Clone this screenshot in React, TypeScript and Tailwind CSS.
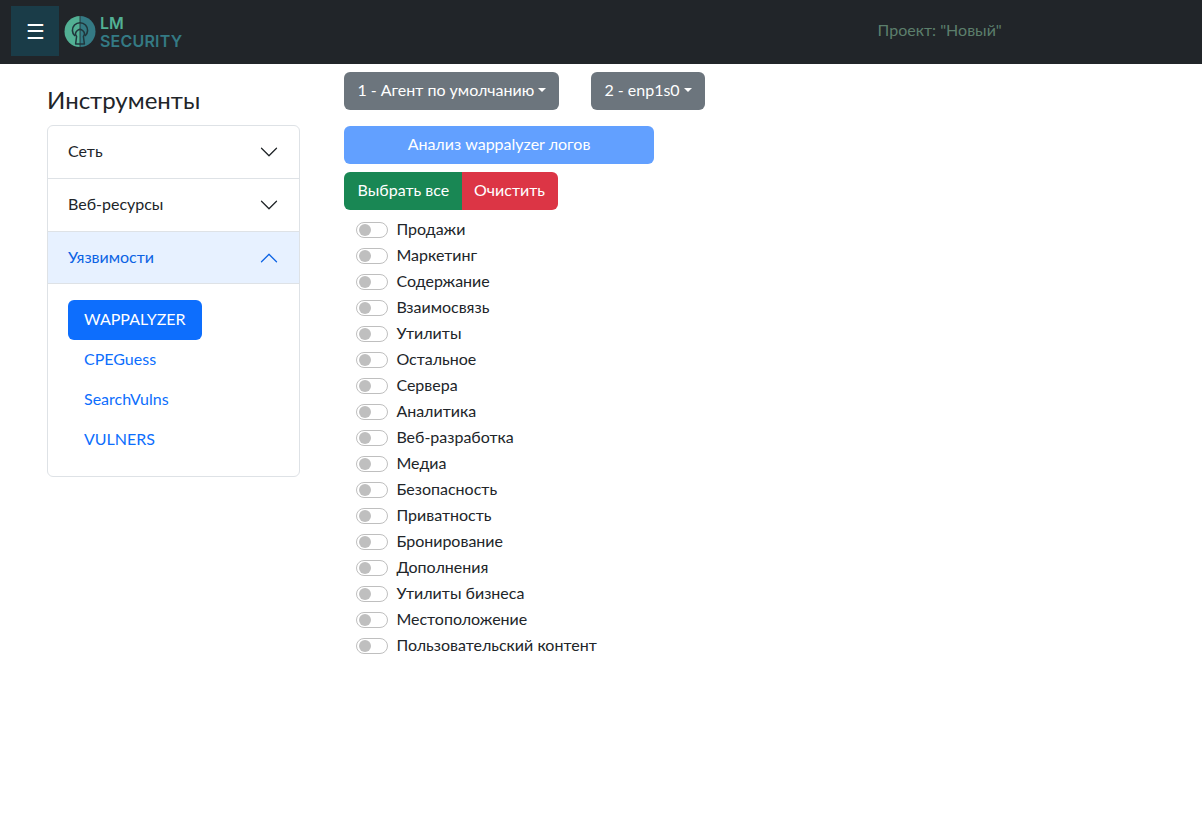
const categories = [
  "Продажи",
  "Маркетинг",
  "Содержание",
  "Взаимосвязь",
  "Утилиты",
  "Остальное",
  "Сервера",
  "Аналитика",
  "Веб-разработка",
  "Медиа",
  "Безопасность",
  "Приватность",
  "Бронирование",
  "Дополнения",
  "Утилиты бизнеса",
  "Местоположение",
  "Пользовательский контент",
];

function Logo() {
  return (
    <div className="flex items-center ml-[4px] mt-[2px] w-[122px] shrink-0">
      <svg width="34" height="34" viewBox="0 0 34 34">
        <path d="M17 1a15.5 15.5 0 0 0 0 31z" fill="#52b094" />
        <path d="M17 1a15.5 15.5 0 0 1 0 31z" fill="#347a84" />
        <path d="M17 1v31" stroke="#212529" strokeWidth="0.8" />
        <path d="M12 21a7.6 7.6 0 1 1 10 0" fill="none" stroke="#20363c" strokeWidth="1.6" />
        <path
          d="M13.6 21.5a4.3 4.3 0 1 1 6.8 0l1 7.5h-8.8z"
          fill="none"
          stroke="#20363c"
          strokeWidth="1.5"
          strokeLinejoin="round"
        />
      </svg>
      <div className="ml-[3px] mt-[1px] flex flex-col gap-[3px] font-['Inter',sans-serif] font-semibold">
        <span className="text-[16px] leading-[15px] text-[#52b094]">LM</span>
        <span className="text-[16px] leading-[15px] text-[#347a84] tracking-[0.2px]">SECURITY</span>
      </div>
    </div>
  );
}

function Chevron({ up }: { up?: boolean }) {
  return (
    <svg width="20" height="20" viewBox="0 0 16 16" fill="currentColor" className={up ? "rotate-180" : ""}>
      <path
        fillRule="evenodd"
        d="M1.646 4.646a.5.5 0 0 1 .708 0L8 10.293l5.646-5.647a.5.5 0 0 1 .708.708l-6 6a.5.5 0 0 1-.708 0l-6-6a.5.5 0 0 1 0-.708z"
      />
    </svg>
  );
}

function AccordionHeader({ title, open }: { title: string; open?: boolean }) {
  return (
    <div
      className={`flex items-center justify-between px-5 text-base border-b border-[#dee2e6] ${
        open ? "h-[52px] bg-[#e7f1ff] text-[#0c63e4]" : "h-[53px] text-[#212529]"
      }`}
    >
      <span className={open ? "-mt-[1px]" : "-mt-[3px]"}>{title}</span>
      <Chevron up={open} />
    </div>
  );
}

function Toggle({ label }: { label: string }) {
  return (
    <div className="flex items-center h-[26px] pl-3">
      <div className="mt-[2px] w-8 h-4 rounded-full border border-[#bfbfbf] bg-white flex items-center pl-[2px]">
        <div className="w-3 h-3 rounded-full bg-[#bfbfbf]" />
      </div>
      <span className="ml-[8.4px] text-base text-[#212529]">{label}</span>
    </div>
  );
}

function DropButton({ text, width }: { text: string; width: string }) {
  return (
    <button className={`h-[38px] pl-[13.4px] rounded-md bg-[#6c757d] text-white text-base flex items-center ${width}`}>
      <span className="-mt-[2px]">{text}</span>
      <span className="ml-[4px] mb-[2px] border-t-[4.8px] border-x-[4.8px] border-x-transparent border-t-white" />
    </button>
  );
}

export default function App() {
  return (
    <div className="min-h-[823px] bg-white font-['Lato',sans-serif] text-[#212529]">
      <header className="h-16 bg-[#212529] flex items-center pl-[11px] pb-[2px]">
        <button className="w-12 h-[50px] bg-[#1a3c48] text-white text-[21px] flex items-center justify-center">
          ☰
        </button>
        <Logo />
        <div className="ml-[692.6px] mb-[2px] text-base text-[#5c7f6c]">Проект: "Новый"</div>
      </header>

      <main className="flex">
        <aside className="w-[253px] ml-[47px] mt-[19px] shrink-0">
          <h2 className="text-2xl leading-[34px] mb-[8px]">Инструменты</h2>
          <div className="border border-[#dee2e6] rounded-md overflow-hidden">
            <AccordionHeader title="Сеть" />
            <AccordionHeader title="Веб-ресурсы" />
            <AccordionHeader title="Уязвимости" open />
            <div className="px-5 pt-4 pb-4 text-base flex flex-col items-start text-[#0d6efd]">
              <a className="h-10 px-4 pb-[2px] flex items-center rounded-md bg-[#0d6efd] text-white">WAPPALYZER</a>
              <a className="h-10 px-4 pb-[2px] flex items-center">CPEGuess</a>
              <a className="h-10 px-4 pb-[2px] flex items-center">SearchVulns</a>
              <a className="h-10 px-4 pb-[2px] flex items-center">VULNERS</a>
            </div>
          </div>
        </aside>

        <section className="ml-[44px] pt-2">
          <div className="flex gap-8">
            <DropButton text="1 - Агент по умолчанию" width="w-[215px]" />
            <DropButton text="2 - enp1s0" width="w-[114px]" />
          </div>
          <button className="mt-4 w-[310px] h-[38px] pb-[2px] rounded-md bg-[#62a0ff] text-white text-base block">
            Анализ wappalyzer логов
          </button>
          <div className="mt-2 flex">
            <button className="h-[38px] w-[118px] pl-[13.6px] pb-[2px] text-left rounded-l-md bg-[#198754] text-white text-base">
              Выбрать все
            </button>
            <button className="h-[38px] w-[96px] pl-[12px] pb-[2px] text-left rounded-r-md bg-[#dc3545] text-white text-base">
              Очистить
            </button>
          </div>
          <div className="mt-[6px]">
            {categories.map((c) => (
              <Toggle key={c} label={c} />
            ))}
          </div>
        </section>
      </main>
    </div>
  );
}
